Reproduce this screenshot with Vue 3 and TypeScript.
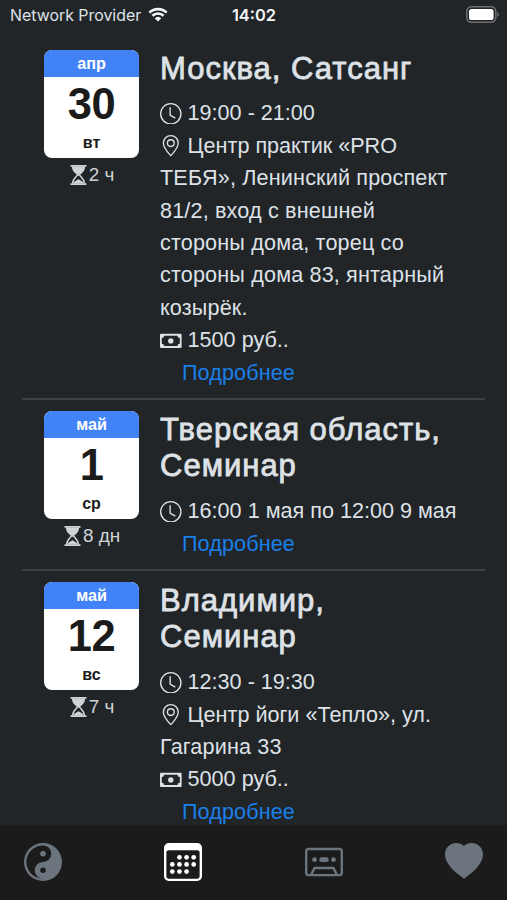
<script setup lang="ts">
interface Retreat {
  month: string
  day: string
  weekday: string
  duration: string
  title: string[]
  time: string
  place?: string[]
  price?: string
}

const events: Retreat[] = [
  {
    month: 'апр', day: '30', weekday: 'вт', duration: '2 ч',
    title: ['Москва, Сатсанг'],
    time: '19:00 - 21:00',
    place: ['Центр практик «PRO', 'ТЕБЯ», Ленинский проспект', '81/2, вход с внешней', 'стороны дома, торец со', 'стороны дома 83, янтарный', 'козырёк.'],
    price: '1500 руб..',
  },
  {
    month: 'май', day: '1', weekday: 'ср', duration: '8 дн',
    title: ['Тверская область,', 'Семинар'],
    time: '16:00 1 мая по 12:00 9 мая',
  },
  {
    month: 'май', day: '12', weekday: 'вс', duration: '7 ч',
    title: ['Владимир,', 'Семинар'],
    time: '12:30 - 19:30',
    place: ['Центр йоги «Тепло», ул.', 'Гагарина 33'],
    price: '5000 руб..',
  },
]

const dots: [number, number][] = [
  [6.5, 6], [9.5, 6], [12.5, 6],
  [3.5, 9], [6.5, 9], [9.5, 9], [12.5, 9],
  [3.5, 12], [6.5, 12], [9.5, 12],
]
</script>

<template>
  <div class="screen">
    <header class="status">
      <div class="carrier">
        <span>Network Provider</span>
        <svg class="wifi" viewBox="0 0 20 15">
          <path d="M1.3 5.6a12.5 12.5 0 0 1 17.4 0" />
          <path d="M4.4 8.8a8 8 0 0 1 11.2 0" />
          <path class="solid" d="M10 14.6 6.7 11.2a4.8 4.8 0 0 1 6.6 0z" />
        </svg>
      </div>
      <div class="clock">14:02</div>
      <div class="power">
        <svg class="battery" viewBox="0 0 34 17">
          <rect x=".8" y=".8" width="29" height="15.4" rx="4.6" fill="none" stroke="#6d6f71" stroke-width="1.5" />
          <rect x="3" y="3" width="24.6" height="11" rx="2.6" fill="#fff" />
          <path d="M31.3 6v5c2.2-.8 2.2-4.2 0-5z" fill="#6d6f71" />
        </svg>
      </div>
    </header>

    <main class="list">
      <article v-for="event in events" :key="event.month + event.day" class="event">
        <div class="date">
          <div class="card">
            <div class="month">{{ event.month }}</div>
            <div class="day">{{ event.day }}</div>
            <div class="weekday">{{ event.weekday }}</div>
          </div>
          <div class="duration">
            <svg class="hourglass" viewBox="0 0 17 20">
              <path d="M.5 0h16v1.8h-16zM.5 18.2h16V20H.5z" />
              <path d="M2 1.5h13c0 4-1.8 5.6-5.2 8.5H7.2C3.8 7.1 2 5.5 2 1.5z" />
              <path d="M2.6 18.5c0-4.2 2.3-5.6 5-8.5h1.8c2.7 2.9 5 4.3 5 8.5" fill="none" stroke="currentColor" stroke-width="1.5" />
              <path d="M3.2 18.5c.6-2 2.8-2.6 5.3-4.2 2.5 1.6 4.7 2.2 5.3 4.2z" />
            </svg>
            <span>{{ event.duration }}</span>
          </div>
        </div>
        <div class="info">
          <h2 class="title"><span v-for="line in event.title" :key="line">{{ line }}</span></h2>
          <div class="line">
            <svg class="icon" viewBox="0 0 16 16">
              <path d="M8 3.5a.5.5 0 0 0-1 0V9a.5.5 0 0 0 .252.434l3.5 2a.5.5 0 0 0 .496-.868L8 8.71z" />
              <path d="M8 16A8 8 0 1 0 8 0a8 8 0 0 0 0 16m7-8A7 7 0 1 1 1 8a7 7 0 0 1 14 0" />
            </svg>
            <span>{{ event.time }}</span>
          </div>
          <template v-if="event.place">
            <div v-for="(line, i) in event.place" :key="line" class="line" :class="{ wrapped: i > 0 }">
              <svg v-if="i === 0" class="icon" viewBox="0 0 16 16">
                <path d="M12.166 8.94c-.524 1.062-1.234 2.12-1.96 3.07A32 32 0 0 1 8 14.58a32 32 0 0 1-2.206-2.57c-.726-.95-1.436-2.008-1.96-3.07C3.304 7.867 3 6.862 3 6a5 5 0 0 1 10 0c0 .862-.305 1.867-.834 2.94M8 16s6-5.686 6-10A6 6 0 0 0 2 6c0 4.314 6 10 6 10" />
                <path d="M8 8a2 2 0 1 1 0-4 2 2 0 0 1 0 4m0 1a3 3 0 1 0 0-6 3 3 0 0 0 0 6" />
              </svg>
              <span>{{ line }}</span>
            </div>
          </template>
          <div v-if="event.price" class="line">
            <svg class="icon" viewBox="0 0 22 22">
              <path fill-rule="evenodd" d="M1 3.9h20a1 1 0 0 1 1 1v12.4a1 1 0 0 1-1 1H1a1 1 0 0 1-1-1V4.9a1 1 0 0 1 1-1zM4.2 5.8a2.4 2.4 0 0 1-2.4 2.4v5.8a2.4 2.4 0 0 1 2.4 2.4h13.6a2.4 2.4 0 0 1 2.4-2.4V8.2a2.4 2.4 0 0 1-2.4-2.4z" />
              <circle cx="11" cy="11.1" r="2.7" />
            </svg>
            <span>{{ event.price }}</span>
          </div>
          <a class="more">Подробнее</a>
        </div>
      </article>
    </main>

    <nav class="tabs">
      <svg class="tab" viewBox="0 0 16 16">
        <path d="M9.167 4.5a1.167 1.167 0 1 1-2.334 0 1.167 1.167 0 0 1 2.334 0" />
        <path d="M8 0a8 8 0 1 0 0 16A8 8 0 0 0 8 0M1 8a7 7 0 0 1 7-7 3.5 3.5 0 1 1 0 7 3.5 3.5 0 1 0 0 7 7 7 0 0 1-7-7m7 4.667a1.167 1.167 0 1 1 0-2.334 1.167 1.167 0 0 1 0 2.334" />
      </svg>
      <svg class="tab active" viewBox="0 0 16 16">
        <path d="M14 0H2a2 2 0 0 0-2 2v12a2 2 0 0 0 2 2h12a2 2 0 0 0 2-2V2a2 2 0 0 0-2-2M1 3.857C1 3.384 1.448 3 2 3h12c.552 0 1 .384 1 .857v10.286c0 .473-.448.857-1 .857H2c-.552 0-1-.384-1-.857z" />
        <circle v-for="([x, y], i) in dots" :key="i" :cx="x" :cy="y" r="1" />
      </svg>
      <svg class="tab" viewBox="0 0 16 16">
        <path d="M4 8a1 1 0 1 0 0-2 1 1 0 0 0 0 2m9-1a1 1 0 1 1-2 0 1 1 0 0 1 2 0M7 6a1 1 0 0 0 0 2h2a1 1 0 1 0 0-2z" />
        <path d="M1.5 2A1.5 1.5 0 0 0 0 3.5v9A1.5 1.5 0 0 0 1.5 14h13a1.5 1.5 0 0 0 1.5-1.5v-9A1.5 1.5 0 0 0 14.5 2zM1 3.5a.5.5 0 0 1 .5-.5h13a.5.5 0 0 1 .5.5v9a.5.5 0 0 1-.5.5h-.691l-1.362-2.724A.5.5 0 0 0 12 10H4a.5.5 0 0 0-.447.276L2.19 13H1.5a.5.5 0 0 1-.5-.5zM11.691 11l1 2H3.309l1-2z" />
      </svg>
      <svg class="tab" viewBox="0 0 16 16">
        <path d="M8 1.314C12.438-3.248 23.534 4.735 8 15-7.534 4.736 3.562-3.248 8 1.314" />
      </svg>
    </nav>
  </div>
</template>

<style>
body {
  margin: 0;
  background: #212529;
}
</style>

<style scoped>
.screen {
  display: flex;
  flex-direction: column;
  width: 507px;
  height: 900px;
  overflow: hidden;
  box-sizing: border-box;
  background: #212528;
  color: #dee2e6;
  font-family: "Liberation Sans", Arial, sans-serif;
}

.status {
  display: grid;
  grid-template-columns: 1fr auto 1fr;
  align-items: center;
  flex: none;
  height: 30px;
  padding: 0 7px 0 10px;
  font-family: Inter, sans-serif;
  font-size: 15.9px;
}

.carrier {
  display: flex;
  align-items: center;
  gap: 7px;
  white-space: nowrap;
}

.wifi {
  width: 20px;
  height: 15px;
  margin-top: -2px;
  fill: none;
  stroke: #f4f6f7;
  stroke-width: 2.6;
}

.wifi .solid {
  fill: #f4f6f7;
  stroke: none;
}

.clock {
  margin-right: 2px;
  color: #f4f6f7;
  font-size: 16.4px;
  font-weight: 600;
}

.power {
  display: flex;
  justify-content: flex-end;
  margin-top: -2px;
}

.battery {
  width: 34px;
  height: 17px;
}

.list {
  flex: 1;
  min-height: 0;
  overflow: hidden;
  padding: 19.6px 22px 0;
}

.event {
  display: flex;
  gap: 21px;
  padding: 0 0 9.2px 22px;
}

.event + .event {
  border-top: 2px solid #3d4144;
  padding-top: 10.6px;
}

.date {
  flex: none;
  width: 95px;
}

.card {
  display: flex;
  flex-direction: column;
  height: 108px;
  border-radius: 8px;
  overflow: hidden;
  background: #fff;
  color: #1b1b1b;
  text-align: center;
  font-weight: 700;
}

.month {
  flex: none;
  height: 27px;
  line-height: 27px;
  background: #4183f6;
  color: #fff;
  font-size: 16.2px;
}

.day {
  height: 54px;
  line-height: 55px;
  font-size: 43.5px;
  letter-spacing: -0.5px;
}

.weekday {
  height: 27px;
  line-height: 24px;
  font-size: 16px;
}

.duration {
  display: flex;
  justify-content: center;
  align-items: center;
  gap: 2px;
  height: 34px;
  padding-left: 1px;
  font-size: 18.9px;
  color: #cfd3d6;
}

.hourglass {
  width: 17px;
  height: 20px;
  fill: currentColor;
}

.info {
  min-width: 0;
}

.title {
  display: flex;
  flex-direction: column;
  margin: 0;
  padding: 1.2px 0 10.2px;
  font-size: 31px;
  font-weight: 400;
  line-height: 36.5px;
  letter-spacing: 1px;
  white-space: nowrap;
  -webkit-text-stroke: 0.8px currentColor;
}

.line {
  display: flex;
  align-items: center;
  gap: 6px;
  height: 32.4px;
  font-size: 21.6px;
  line-height: 32.4px;
  white-space: nowrap;
}

.line.wrapped {
  letter-spacing: 0.16px;
}

.icon {
  flex: none;
  width: 21.6px;
  height: 21.6px;
  fill: currentColor;
}

.more {
  display: block;
  padding-left: 22px;
  color: #1a7fe8;
  font-size: 21.6px;
  line-height: 32.4px;
  letter-spacing: 0.1px;
}

.tabs {
  display: flex;
  justify-content: space-between;
  align-items: center;
  flex: none;
  box-sizing: border-box;
  height: 75px;
  padding: 0 24px 1px 24px;
  background: #1b1b1b;
  color: #6c757d;
}

.tab {
  width: 38px;
  height: 38px;
  fill: currentColor;
}

.tab.active {
  color: #fff;
}
</style>
